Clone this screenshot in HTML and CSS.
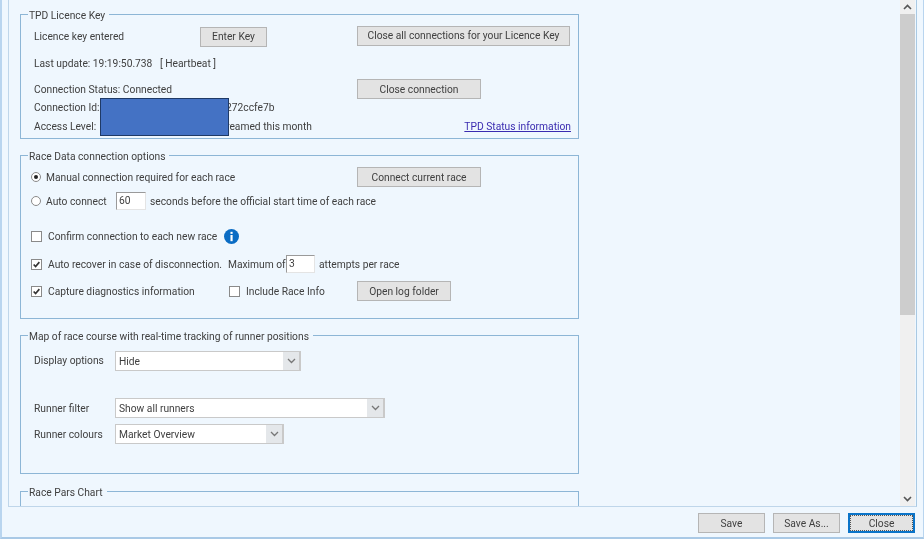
FILE: index.html
```html
<!DOCTYPE html>
<html lang="en">
<head>
<meta charset="utf-8">
<title>TPD settings</title>
<link rel="stylesheet" href="styles.css">
</head>
<body>
<div class="window">
  <div class="panel">
    <div class="content">

      <section class="group g1">
        <div class="legend">TPD Licence Key</div>
        <div class="row r1a">
          <span class="c1">Licence key entered</span>
          <button class="btn b-enter">Enter Key</button>
          <button class="btn b-all">Close all connections for your Licence Key</button>
        </div>
        <div class="row r1b">Last update: 19:19:50.738&nbsp;&nbsp; [ Heartbeat ]</div>
        <div class="row r1c">
          <span class="c12">Connection Status: Connected</span>
          <button class="btn b-wide">Close connection</button>
        </div>
        <div class="row r1d"><span class="c-hid">Connection Id:</span><span>272ccfe7b</span></div>
        <div class="row r1e">
          <span class="c-hid">Access Level:</span>
          <span class="grow">reamed this month</span>
          <a class="link" href="#">TPD Status information</a>
        </div>
        <div class="redact"></div>
      </section>

      <section class="group g2">
        <div class="legend">Race Data connection options</div>
        <div class="row r2a">
          <span class="radio on"></span>
          <span class="c-manual">Manual connection required for each race</span>
          <button class="btn b-wide">Connect current race</button>
        </div>
        <div class="row r2b">
          <span class="radio"></span>
          <span class="c-auto">Auto connect</span>
          <span class="field f-60">60</span>
          <span>seconds before the official start time of each race</span>
        </div>
        <div class="row r2c">
          <span class="check"></span>
          <span class="c-lab">Confirm connection to each new race</span>
          <svg class="info" viewBox="0 0 16 16" aria-hidden="true">
            <circle cx="8" cy="8" r="8" fill="#0a6cc4"/>
            <rect x="6.9" y="3" width="2.3" height="2.2" fill="#fff"/>
            <rect x="6.9" y="6.4" width="2.3" height="6.6" fill="#fff"/>
          </svg>
        </div>
        <div class="row r2d">
          <span class="check on"><svg viewBox="0 0 11 11" aria-hidden="true"><path d="M2 5.5 L4.4 8 L9 2.6" fill="none" stroke="#333" stroke-width="2"/></svg></span>
          <span class="c-rec">Auto recover in case of disconnection.</span>
          <span class="c-max">Maximum of</span>
          <span class="field f-3">3</span>
          <span>attempts per race</span>
        </div>
        <div class="row r2e">
          <span class="check on"><svg viewBox="0 0 11 11" aria-hidden="true"><path d="M2 5.5 L4.4 8 L9 2.6" fill="none" stroke="#333" stroke-width="2"/></svg></span>
          <span class="c-cap">Capture diagnostics information</span>
          <span class="check"></span>
          <span class="c-inc">Include Race Info</span>
          <button class="btn b-log">Open log folder</button>
        </div>
      </section>

      <section class="group g3">
        <div class="legend">Map of race course with real-time tracking of runner positions</div>
        <div class="row r3a">
          <span class="c-combo">Display options</span>
          <div class="combo cb-display"><span>Hide</span><i class="arrow"><svg viewBox="0 0 9 6" aria-hidden="true"><path d="M1 1 L4.5 4.5 L8 1" fill="none" stroke="#777" stroke-width="1.3"/></svg></i></div>
        </div>
        <div class="row r3b">
          <span class="c-combo">Runner filter</span>
          <div class="combo cb-filter"><span>Show all runners</span><i class="arrow"><svg viewBox="0 0 9 6" aria-hidden="true"><path d="M1 1 L4.5 4.5 L8 1" fill="none" stroke="#777" stroke-width="1.3"/></svg></i></div>
        </div>
        <div class="row r3c">
          <span class="c-combo">Runner colours</span>
          <div class="combo cb-colours"><span>Market Overview</span><i class="arrow"><svg viewBox="0 0 9 6" aria-hidden="true"><path d="M1 1 L4.5 4.5 L8 1" fill="none" stroke="#777" stroke-width="1.3"/></svg></i></div>
        </div>
      </section>

      <section class="group g4">
        <div class="legend">Race Pars Chart</div>
      </section>
    </div>

    <div class="scrollbar">
      <div class="sb-btn"><svg viewBox="0 0 9 6" aria-hidden="true"><path d="M1 5 L4.5 1.5 L8 5" fill="none" stroke="#555" stroke-width="1.6"/></svg></div>
      <div class="sb-thumb"></div>
      <div class="sb-rest"></div>
      <div class="sb-btn"><svg viewBox="0 0 9 6" aria-hidden="true"><path d="M1 1 L4.5 4.5 L8 1" fill="none" stroke="#555" stroke-width="1.6"/></svg></div>
    </div>
  </div>

  <div class="footer">
    <button class="btn b-foot">Save</button>
    <button class="btn b-foot">Save As...</button>
    <button class="btn b-foot b-focus">Close</button>
  </div>
</div>
</body>
</html>
```
FILE: styles.css
```css
* { box-sizing: border-box; }
html, body { margin: 0; padding: 0; }
body {
  width: 924px;
  height: 539px;
  overflow: hidden;
  font-family: Roboto, "Liberation Sans", Arial, sans-serif;
  font-size: 10.25px;
  color: #404040;
}
.window {
  width: 924px;
  height: 539px;
  background: #eff7fe;
  border-left: 2px solid #b9d5ef;
  border-right: 1px solid #b9d5ef;
  border-bottom: 2px solid #a9c9e6;
  padding-left: 6px;
  padding-right: 6px;
  filter: blur(0.4px);
}
.panel {
  display: flex;
  width: 909px;
  height: 507px;
  border-left: 1px solid #bfd6ea;
  border-right: 1px solid #a9c9e3;
  border-bottom: 1px solid #bfd6ea;
  overflow: hidden;
}
.content { flex: 1; min-width: 0; padding-left: 11px; padding-top: 14px; }

.group {
  position: relative;
  width: 559px;
  border: 1px solid #8db6d6;
}
.g1 { height: 125px; }
.g2 { height: 164px; margin-top: 16px; }
.g3 { height: 139px; margin-top: 16px; }
.g4 { height: 60px; margin-top: 17px; }
.legend {
  width: fit-content;
  height: 15px;
  line-height: 18px;
  margin: -8px 0 0 7px;
  padding: 0 4px 0 1px;
  background: #eff7fe;
  white-space: nowrap;
}

.row { display: flex; align-items: center; padding-left: 13px; white-space: nowrap; }
.grow { flex: 1; }
.c1 { width: 166px; }
.c12 { width: 323px; }
.c-hid { width: 192px; flex: none; }

.r1a { height: 20px; margin-top: 4px; }
.r1b { height: 16px; margin-top: 9px; }
.r1c { height: 20px; margin-top: 8px; }
.r1d { height: 16px; }
.r1e { height: 16px; margin-top: 3px; padding-right: 7px; }
.link { color: #3a2bb0; text-decoration: underline; }

.redact {
  position: absolute;
  left: 79px;
  top: 83px;
  width: 129px;
  height: 38px;
  background: #4472c4;
  border: 1px solid #1f3a66;
}

.btn {
  display: block;
  height: 20px;
  padding: 0;
  font: inherit;
  color: #404040;
  background: #e3e3e3;
  border: 1px solid #b5b5b5;
}
.b-enter { width: 67px; margin-right: 90px; margin-top: 1px; }
.b-all { width: 213px; margin-top: -1px; }
.b-wide { width: 124px; }
.b-log { width: 94px; }
.b-foot { width: 67px; }
.b-focus {
  border: 1px solid #0a74c9;
  box-shadow: inset 0 0 0 1px #0a74c9;
  outline: 1px dotted #555;
  outline-offset: -3px;
}

.r2a { height: 20px; margin-top: 4px; padding-left: 10px; }
.r2b { height: 18px; margin-top: 5px; padding-left: 10px; }
.r2c { height: 16px; margin-top: 18px; padding-left: 10px; }
.r2d { height: 18px; margin-top: 11px; padding-left: 10px; }
.r2e { height: 20px; margin-top: 8px; padding-left: 10px; }

.radio {
  width: 10px;
  height: 10px;
  margin-right: 5px;
  border: 1px solid #8a8a8a;
  border-radius: 50%;
  background: #fff;
  flex: none;
  display: flex;
  align-items: center;
  justify-content: center;
}
.radio.on::after { content: ""; width: 4px; height: 4px; border-radius: 50%; background: #222; }
.check {
  width: 11px;
  height: 11px;
  flex: none;
  border: 1px solid #8a8a8a;
  background: #fff;
  display: block;
}
.check svg { display: block; width: 9px; height: 9px; }

.c-manual { width: 311px; }
.c-auto { width: 70px; }
.field {
  height: 18px;
  line-height: 16px;
  background: #fff;
  border: 1px solid;
  border-color: #9a9a9a #e4e4e4 #e4e4e4 #9a9a9a;
  padding-left: 2px;
  flex: none;
}
.f-60 { width: 30px; margin-right: 4px; }
.f-3 { width: 29px; margin-right: 4px; }
.c-lab { padding-left: 6px; }
.info { width: 15px; height: 15px; margin-left: 7px; flex: none; }
.c-rec { width: 186px; padding-left: 6px; flex: none; }
.c-max { width: 58px; flex: none; }
.c-cap { width: 187px; padding-left: 6px; flex: none; }
.c-inc { width: 117px; padding-left: 6px; flex: none; }

.r3a { height: 20px; margin-top: 8px; align-items: flex-start; }
.r3b { height: 20px; margin-top: 27px; }
.r3c { height: 20px; margin-top: 6px; }
.c-combo { width: 81px; line-height: 20px; }
.r3b .c-combo, .r3c .c-combo { padding-top: 1px; }
.combo {
  height: 20px;
  display: flex;
  align-items: center;
  justify-content: space-between;
  padding-left: 3px;
  background: #fff;
  border: 1px solid #c9c9c9;
  border-right-width: 2px;
}
.cb-display { width: 186px; }
.cb-filter { width: 270px; }
.cb-colours { width: 169px; }
.arrow {
  width: 16px;
  height: 18px;
  background: #e4e7ea;
  display: flex;
  align-items: center;
  justify-content: center;
}
.arrow svg { width: 9px; height: 6px; }

.scrollbar {
  width: 15px;
  height: 506px;
  margin-right: 1px;
  flex: none;
  display: flex;
  flex-direction: column;
  background: #f0f0f0;
}
.sb-btn { height: 14px; flex: none; display: flex; align-items: center; justify-content: center; }
.sb-btn svg { width: 9px; height: 6px; }
.sb-thumb { height: 301px; flex: none; background: #cdcdcd; }
.sb-rest { flex: 1; }

.footer {
  display: flex;
  justify-content: flex-end;
  gap: 8px;
  padding-top: 6px;
  padding-right: 2px;
}
```
